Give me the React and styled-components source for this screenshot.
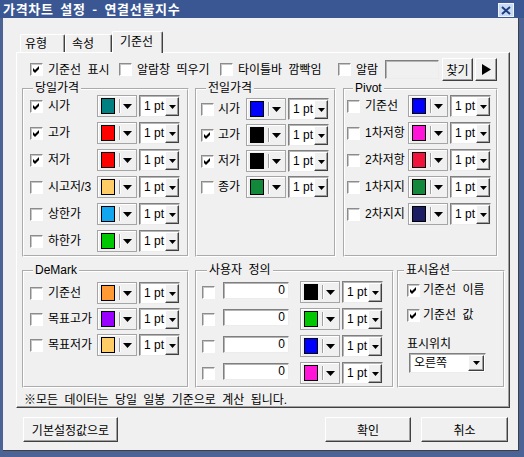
import React from "react";
import styled, { createGlobalStyle } from "styled-components";

const GlobalStyle = createGlobalStyle`
  html, body { margin: 0; padding: 0; background: #f0f0f0; }
  body {
    font-family: "Liberation Sans", "Noto Sans CJK KR", sans-serif;
    font-size: 12px;
    word-spacing: 3px;
    color: #000;
  }
  * { box-sizing: border-box; }
`;

/* ---------- window chrome ---------- */

const Window = styled.div`
  width: 524px;
  height: 457px;
  display: flex;
  flex-direction: column;
  background: #f0f0f0;
  overflow: hidden;
`;

const TitleBar = styled.div`
  flex: none;
  height: 18px;
  display: flex;
  align-items: center;
  justify-content: space-between;
  padding: 0 10px 0 3px;
  background: #3a5794;
`;

const TitleText = styled.span`
  color: #fff;
  font-family: "Noto Sans CJK KR", sans-serif;
  font-weight: bold;
  font-size: 13px;
  line-height: 16px;
  letter-spacing: 0.7px;
  word-spacing: 3px;
`;

const CloseButton = styled.span`
  width: 16px;
  height: 14px;
  margin-top: 2px;
  display: flex;
  align-items: center;
  justify-content: center;
  background: #c8daf4;
  border: 1px solid #eef4fc;
`;

const Frame = styled.div`
  flex: 1;
  display: flex;
  flex-direction: column;
  padding-top: 14px;
  border-left: 3px solid #4b6495;
  border-right: 5px solid #4b6495;
  border-bottom: 6px solid #4b6495;
  box-shadow: inset -1px -1px 0 #404040;
`;

/* ---------- tabs ---------- */

const TabStrip = styled.div`
  height: 20px;
  display: flex;
  align-items: flex-end;
  padding-left: 17px;
`;

const Tab = styled.div`
  position: relative;
  z-index: ${(p) => (p.$active ? 1 : 0)};
  width: ${(p) => p.$w}px;
  height: ${(p) => (p.$active ? 22 : 18)}px;
  margin-bottom: ${(p) => (p.$active ? -1 : 0)}px;
  padding-left: ${(p) => p.$pl}px;
  padding-top: ${(p) => (p.$active ? 3 : 2)}px;
  line-height: 14px;
  background: #f0f0f0;
  border-left: 1px solid #fff;
  border-top: 1px solid #fff;
  border-right: 1px solid #404040;
  border-top-left-radius: 2px;
  border-top-right-radius: 2px;
  box-shadow: inset -1px 0 0 #a0a0a0;
`;

const TabPanel = styled.div`
  margin-left: 13px;
  width: 494px;
  height: 356px;
  display: flex;
  flex-direction: column;
  padding: 5px 0 0 5px;
  border-left: 1px solid #fff;
  border-top: 1px solid #fff;
  border-right: 1px solid #404040;
  border-bottom: 1px solid #404040;
  box-shadow: inset -1px -1px 0 #a0a0a0;
`;

/* ---------- basic controls ---------- */

const CheckFrame = styled.span`
  flex: none;
  width: 13px;
  height: 13px;
  display: inline-flex;
  align-items: center;
  justify-content: center;
  background: #fff;
  border: 1px solid;
  border-color: #8c8c8c #fff #fff #8c8c8c;
  box-shadow: inset 1px 1px 0 #c6c6c6;
`;

function Check({ on }) {
  return (
    <CheckFrame>
      {on && (
        <svg width="7" height="7" viewBox="0 0 7 7">
          <polygon points="0,2 2,4 6,0 6,3 2,7 0,5" fill="#000" />
        </svg>
      )}
    </CheckFrame>
  );
}

const CheckItem = styled.label`
  flex: none;
  display: flex;
  align-items: center;
  gap: ${(p) => p.$gap ?? 5}px;
  width: ${(p) => (p.$w ? `${p.$w}px` : "auto")};
  height: 22px;
  margin-top: ${(p) => p.$mt ?? 0}px;
  line-height: 14px;
  white-space: nowrap;
`;

const Arrow = ({ w, h }) => (
  <svg width={w} height={h} viewBox={`0 0 ${w} ${h}`}>
    <polygon points={`0,0 ${w},0 ${w / 2},${h}`} fill="#000" />
  </svg>
);

const ColorComboBox = styled.div`
  flex: none;
  width: 40px;
  height: 22px;
  display: flex;
  align-items: center;
  padding-left: 3px;
  margin-left: ${(p) => p.$ml ?? 0}px;
  background: #f0f0f0;
  border: 1px solid #a5a5a5;
  box-shadow: inset 1px 1px 0 #fff;
`;

const Swatch = styled.span`
  width: 14px;
  height: 16px;
  border: 1px solid #000;
  background: ${(p) => p.$c};
`;

const ComboSep = styled.span`
  width: 2px;
  height: 14px;
  margin: 0 2px 0 4px;
  border-left: 1px solid #a0a0a0;
  border-right: 1px solid #fff;
`;

function ColorCombo({ color, ml }) {
  return (
    <ColorComboBox $ml={ml}>
      <Swatch $c={color} />
      <ComboSep />
      <Arrow w={9} h={5} />
    </ColorComboBox>
  );
}

const Sunken = styled.div`
  flex: none;
  display: flex;
  background: ${(p) => p.$bg ?? "#fff"};
  border: 1px solid;
  border-color: #7f7f7f #ececec #ececec #7f7f7f;
  box-shadow: inset 1px 1px 0 #b4b4b4;
`;

const PtBox = styled(Sunken)`
  width: 41px;
  height: 22px;
  margin-left: 2px;
  padding: 1px 0 0 1px;
`;

const FieldText = styled.span`
  flex: 1;
  padding-left: ${(p) => p.$pl ?? 3}px;
  padding-right: ${(p) => p.$pr ?? 0}px;
  text-align: ${(p) => p.$align ?? "left"};
  line-height: ${(p) => p.$lh ?? 19}px;
  word-spacing: 0;
  white-space: nowrap;
  overflow: hidden;
`;

const DropButton = styled.span`
  flex: none;
  width: ${(p) => p.$w ?? 14}px;
  display: flex;
  align-items: center;
  justify-content: center;
  background: #f0f0f0;
  border: 1px solid;
  border-color: #fff #404040 #404040 #fff;
  box-shadow: inset -1px -1px 0 #a0a0a0;
`;

function PtCombo() {
  return (
    <PtBox>
      <FieldText>1 pt</FieldText>
      <DropButton>
        <Arrow w={7} h={4} />
      </DropButton>
    </PtBox>
  );
}

const NumberField = styled(Sunken)`
  width: 66px;
  height: 17px;
  margin-left: 8px;
  align-self: flex-start;
  margin-top: 1px;
`;

const AlarmField = styled(Sunken)`
  width: 54px;
  height: 19px;
  margin-right: 3px;
`;

const SelectBox = styled(Sunken)`
  width: 77px;
  height: 20px;
  margin: 2px 0 0 2px;
  padding: 1px;
`;

const Button = styled.button`
  flex: none;
  width: ${(p) => p.$w}px;
  height: ${(p) => p.$h ?? 25}px;
  margin-right: ${(p) => p.$mr ?? 0}px;
  padding: 0;
  display: flex;
  align-items: center;
  justify-content: center;
  font: inherit;
  color: #000;
  background: #f0f0f0;
  border: 1px solid;
  border-color: #fff #404040 #404040 #fff;
  box-shadow: inset -1px -1px 0 #a0a0a0;
`;

/* ---------- layout ---------- */

const OptionRow = styled.div`
  height: 23px;
  display: flex;
  align-items: center;
  padding-left: 8px;
`;

const GroupRow = styled.div`
  display: flex;
  gap: ${(p) => p.$gap}px;
  margin-top: ${(p) => p.$mt}px;
`;

const Group = styled.fieldset`
  margin: 0 0 0 ${(p) => p.$ml ?? 0}px;
  min-width: 0;
  flex: none;
  width: ${(p) => p.$w}px;
  height: ${(p) => p.$h}px;
  padding: ${(p) => p.$pt ?? 0}px 0 0 ${(p) => p.$pl}px;
  border: 2px groove #fff;
  display: flex;
  flex-direction: column;
  gap: ${(p) => p.$gap ?? 5}px;
`;

const Legend = styled.legend`
  padding: 0 2px;
  margin-left: ${(p) => p.$ml}px;
  line-height: 13px;
`;

const Row = styled.div`
  height: 22px;
  display: flex;
  align-items: center;
`;

const RowLabel = styled.span`
  flex: none;
  width: ${(p) => p.$w}px;
  margin-left: ${(p) => p.$gap}px;
  line-height: 14px;
  white-space: nowrap;
`;

const OptionsBody = styled.div`
  display: flex;
  flex-direction: column;
  padding: 2px 0 0 3px;
`;

const Caption = styled.div`
  margin-top: ${(p) => p.$mt}px;
  line-height: 14px;
`;

const Note = styled.div`
  margin-top: 5px;
  padding-left: 2px;
  line-height: 14px;
  white-space: nowrap;
`;

const ButtonRow = styled.div`
  margin-top: 9px;
  display: flex;
  justify-content: space-between;
  padding: 0 11px 0 20px;
`;

const ButtonGroup = styled.div`
  display: flex;
  gap: 10px;
`;

/* ---------- data ---------- */

const todayLines = [
  { label: "시가", on: true, color: "#008080" },
  { label: "고가", on: true, color: "#ff0000" },
  { label: "저가", on: true, color: "#ff0000" },
  { label: "시고저/3", on: false, color: "#ffcc66" },
  { label: "상한가", on: false, color: "#12a6ee" },
  { label: "하한가", on: false, color: "#00c800" },
];

const prevLines = [
  { label: "시가", on: false, color: "#0000ff" },
  { label: "고가", on: true, color: "#000000" },
  { label: "저가", on: true, color: "#000000" },
  { label: "종가", on: false, color: "#12883a" },
];

const pivotLines = [
  { label: "기준선", color: "#0000ff" },
  { label: "1차저항", color: "#ff14d8" },
  { label: "2차저항", color: "#f0143c" },
  { label: "1차지지", color: "#13883a" },
  { label: "2차지지", color: "#1c1c64" },
];

const demarkLines = [
  { label: "기준선", color: "#ff9933" },
  { label: "목표고가", color: "#9900ff" },
  { label: "목표저가", color: "#ffcc66" },
];

const userLines = ["#000000", "#00c800", "#0000ff", "#ff14d8"];

function LineRow({ on, label, color, labelW, gap }) {
  return (
    <Row>
      <Check on={on} />
      <RowLabel $w={labelW} $gap={gap}>
        {label}
      </RowLabel>
      <ColorCombo color={color} />
      <PtCombo />
    </Row>
  );
}

export default function App() {
  return (
    <>
      <GlobalStyle />
      <Window>
        <TitleBar>
          <TitleText>가격차트 설정 - 연결선물지수</TitleText>
          <CloseButton>
            <svg width="10" height="9" viewBox="0 0 10 9">
              <path d="M1 1 L9 8 M9 1 L1 8" stroke="#1d3c7c" strokeWidth="2" />
            </svg>
          </CloseButton>
        </TitleBar>

        <Frame>
          <TabStrip>
            <Tab $w={45} $pl={4}>유형</Tab>
            <Tab $w={47} $pl={6}>속성</Tab>
            <Tab $w={51} $pl={7} $active>기준선</Tab>
          </TabStrip>

          <TabPanel>
            <OptionRow>
              <CheckItem $w={89}>
                <Check on />
                기준선 표시
              </CheckItem>
              <CheckItem $w={101}>
                <Check />
                알람창 띄우기
              </CheckItem>
              <CheckItem $w={118}>
                <Check />
                타이틀바 깜빡임
              </CheckItem>
              <CheckItem $w={47}>
                <Check />
                알람
              </CheckItem>
              <AlarmField $bg="#f0f0f0" />
              <Button $w={31} $h={23} $mr={2}>
                찾기
              </Button>
              <Button $w={22} $h={23}>
                <svg width="9" height="11" viewBox="0 0 9 11">
                  <polygon points="0,0 9,5.5 0,11" fill="#000" />
                </svg>
              </Button>
            </OptionRow>

            <GroupRow $mt={1} $gap={6}>
              <Group $w={167} $h={175} $pl={6}>
                <Legend $ml={3}>당일가격</Legend>
                {todayLines.map((l) => (
                  <LineRow key={l.label} {...l} labelW={49} gap={5} />
                ))}
              </Group>
              <Group $w={141} $h={175} $pl={4} $pt={3} $gap={4}>
                <Legend $ml={5}>전일가격</Legend>
                {prevLines.map((l) => (
                  <LineRow key={l.label} {...l} labelW={28} gap={4} />
                ))}
              </Group>
              <Group $w={155} $h={175} $pl={2} $ml={1}>
                <Legend $ml={6}>Pivot</Legend>
                {pivotLines.map((l) => (
                  <LineRow key={l.label} {...l} labelW={43} gap={5} />
                ))}
              </Group>
            </GroupRow>

            <GroupRow $mt={7} $gap={6}>
              <Group $w={167} $h={124} $pl={6} $pt={5} $gap={4}>
                <Legend $ml={3}>DeMark</Legend>
                {demarkLines.map((l) => (
                  <LineRow key={l.label} {...l} labelW={49} gap={5} />
                ))}
              </Group>
              <Group $w={199} $h={124} $pl={5} $pt={4}>
                <Legend $ml={5}>사용자 정의</Legend>
                {userLines.map((c, i) => (
                  <Row key={i}>
                    <Check />
                    <NumberField>
                      <FieldText $align="right" $pr={3} $lh={14}>
                        0
                      </FieldText>
                    </NumberField>
                    <ColorCombo color={c} ml={11} />
                    <PtCombo />
                  </Row>
                ))}
              </Group>
              <Group $w={108} $h={124} $pl={5} $gap={0} $ml={-3}>
                <Legend $ml={0}>표시옵션</Legend>
                <OptionsBody>
                  <CheckItem $gap={3}>
                    <Check on />
                    기준선 이름
                  </CheckItem>
                  <CheckItem $gap={3} $mt={3}>
                    <Check on />
                    기준선 값
                  </CheckItem>
                  <Caption $mt={11}>표시위치</Caption>
                  <SelectBox>
                    <FieldText $lh={16}>오른쪽</FieldText>
                    <DropButton $w={16}>
                      <Arrow w={7} h={4} />
                    </DropButton>
                  </SelectBox>
                </OptionsBody>
              </Group>
            </GroupRow>

            <Note>※모든 데이터는 당일 일봉 기준으로 계산 됩니다.</Note>
          </TabPanel>

          <ButtonRow>
            <Button $w={95}>기본설정값으로</Button>
            <ButtonGroup>
              <Button $w={86}>확인</Button>
              <Button $w={87}>취소</Button>
            </ButtonGroup>
          </ButtonRow>
        </Frame>
      </Window>
    </>
  );
}
